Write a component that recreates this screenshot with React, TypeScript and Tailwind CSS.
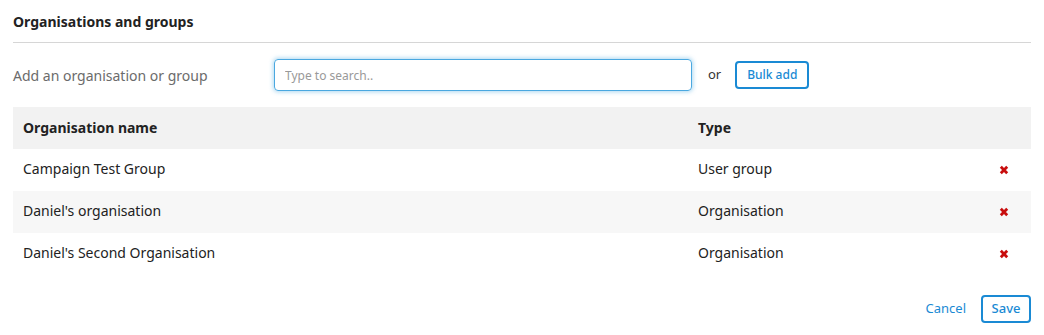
const rows = [
  { name: "Campaign Test Group", type: "User group" },
  { name: "Daniel's organisation", type: "Organisation" },
  { name: "Daniel's Second Organisation", type: "Organisation" },
];

function RemoveIcon() {
  return (
    <svg width="10" height="10" viewBox="0 0 10 10" className="block">
      <path d="M1.8 1.8 L8.2 8.2 M8.2 1.8 L1.8 8.2" stroke="#c80d0d" strokeWidth="2.8" strokeLinecap="butt" />
    </svg>
  );
}

export default function App() {
  return (
    <div className="bg-white px-[13px] font-['Noto_Sans',sans-serif] text-[#222]">
      <div className="border-b border-[#d6d6d6] pt-[12px] pb-[11px] text-[14px] leading-[19px] font-bold">
        Organisations and groups
      </div>

      <div className="mt-[16px] flex h-[32px] items-center">
        <label className="w-[261px] text-[14px] text-[#6b6b6b]">Add an organisation or group</label>
        <input
          type="text"
          placeholder="Type to search.."
          className="h-[32px] w-[418px] rounded-[4px] border border-[#4aa8e0] px-[10px] text-[12px] placeholder:text-[#999] shadow-[0_0_4px_1px_rgba(74,168,224,0.45)] outline-none"
        />
        <span className="ml-[16px] text-[13px] text-[#333]">or</span>
        <button className="ml-[14px] h-[28px] w-[74px] rounded-[4px] border-2 border-[#1a8ad4] text-[12px] font-medium text-[#1a8ad4]">
          Bulk add
        </button>
      </div>

      <div className="mt-[16px]">
        <div className="flex h-[42px] items-center bg-[#f2f2f2] text-[14px] leading-[18px] font-bold">
          <div className="w-[675px] pl-[10px]">Organisation name</div>
          <div className="pl-[10px]">Type</div>
        </div>
        {rows.map((r, i) => (
          <div
            key={i}
            className={"flex h-[42px] items-center pb-[2px] text-[14px] leading-[18px] " + (i % 2 === 1 ? "bg-[#f7f7f7]" : "bg-white")}
          >
            <div className="w-[675px] pl-[10px]">{r.name}</div>
            <div className="flex-1 pl-[10px]">{r.type}</div>
            <div className="w-[32px] pt-[2px]">
              <RemoveIcon />
            </div>
          </div>
        ))}
      </div>

      <div className="mt-[20px] flex items-center justify-end">
        <button className="text-[13px] text-[#1a8ad4]">Cancel</button>
        <button className="ml-[15px] h-[28px] w-[50px] rounded-[4px] border-2 border-[#1a8ad4] text-[13px] font-medium text-[#1a8ad4]">
          Save
        </button>
      </div>
    </div>
  );
}
